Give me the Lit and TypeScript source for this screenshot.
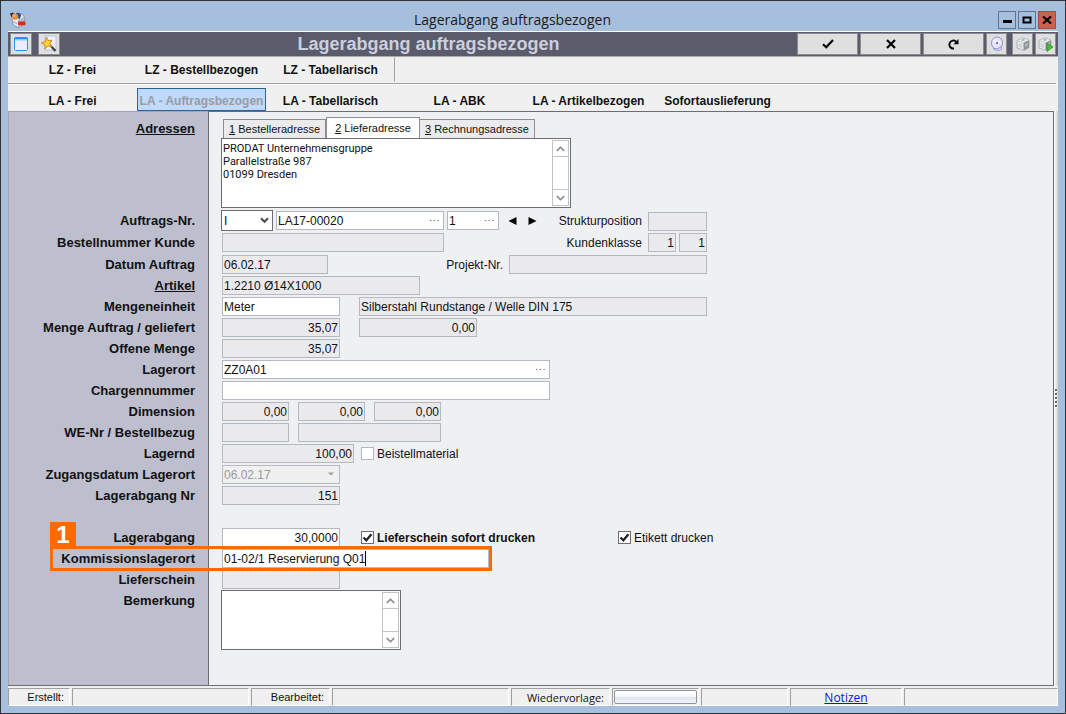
import { LitElement, html, css, svg, nothing, TemplateResult } from "lit";
import { customElement, property } from "lit/decorators.js";
import { classMap } from "lit/directives/class-map.js";

const chevron = (up: boolean) => html`<svg width="9" height="6" viewBox="0 0 9 6" aria-hidden="true">
  <path d=${up ? "M0.8 5 L4.5 1.3 L8.2 5" : "M0.8 1 L4.5 4.7 L8.2 1"} fill="none" stroke="#858585" stroke-width="1.6" />
</svg>`;

const printer = svg`
  <path d="M2 4.500 L8 2 L14 4 L14 11.500 L8.500 14.500 L2 12 Z" fill="#e6e8e9" stroke="#a3a7aa" stroke-width=".8"/>
  <path d="M8.500 6.500 L14 4 L14 11.500 L8.500 14.500 Z" fill="#8d9295"/>
  <path d="M10 8 L12.800 6.700 V9.500 L10 11 Z" fill="#b5babd"/>
  <path d="M2 4.500 L8.500 6.500 L14 4 L8 2 Z" fill="#f8f9f9" stroke="#b5b8ba" stroke-width=".6"/>
  <path d="M6 3.500 L9.500 2.500 L10 4.500 L7 5 Z" fill="#8fc4cf"/>
  <path d="M3.500 8 L7 9.200 M3.500 10 L7 11.200" stroke="#c0c4c6" stroke-width="1"/>`;

@customElement("memo-box")
class MemoBox extends LitElement {
  static styles = css`
    :host { display: flex; box-sizing: border-box; border: 1px solid #6b6d72; background: #fff; padding: 1px; }
    textarea {
      flex: 1; min-width: 0; box-sizing: border-box; border: 0; outline: 0; resize: none; overflow: hidden;
      margin: 0; padding: 2px 0 0; background: #fff; color: #111; font: 11px/13px Roboto, "Noto Sans", sans-serif;
    }
    .bar { display: flex; flex-direction: column; justify-content: space-between; width: 17px; box-sizing: border-box; border: 1px solid #c2c2c2; }
    button { display: grid; place-items: center; height: 16px; padding: 0; border: 0; background: #fff; }
    .up { border-bottom: 1px solid #c2c2c2; }
    .down { border-top: 1px solid #c2c2c2; }
  `;
  @property() text = "";
  @property() name = "";
  render() {
    return html`<textarea aria-label=${this.name} .value=${this.text}></textarea>
      <div class="bar">
        <button class="up" aria-label="Nach oben">${chevron(true)}</button>
        <button class="down" aria-label="Nach unten">${chevron(false)}</button>
      </div>`;
  }
}

interface BoxOptions {
  edit?: boolean;
  right?: boolean;
  more?: boolean;
  label?: string;
}

@customElement("app-root")
class AppRoot extends LitElement {
  static styles = css`
    :host { display: block; font: 12px/16px "Liberation Sans", Arial, sans-serif; color: #111; }
    * { box-sizing: border-box; }
    button { font: inherit; color: inherit; padding: 0; margin: 0; }
    a { color: inherit; }
    svg { display: block; }

    .window { display: flex; flex-direction: column; min-height: 100vh; background: #a6bfdc; border: 1px solid #333; padding: 0 7px 7px; }
    .titlebar { display: grid; grid-template-columns: auto 1fr auto; align-items: center; height: 30px; padding: 7px 2px 0 1px; text-align: center; }
    .titlebar h1 { margin: 0; font: 14px/18px "Open Sans", "Noto Sans", sans-serif; color: #1a1a1a; }
    .controls { display: flex; justify-content: flex-end; gap: 2px; }
    .controls button { display: grid; place-items: center; width: 18px; height: 18px; border: 1px solid #5d7497; background: #a6bfdc; }
    .controls .close { background: #cd6150; border-color: #a94a3d; }

    .client { flex: 1; display: flex; flex-direction: column; background: #f0f0f0; border-top: 1px solid #fff; }
    .toolbar { display: grid; grid-template-columns: auto 1fr auto; align-items: center; height: 25px; padding: 0 2px; background: #5a5c6b; border-bottom: 1px solid #a8a8ae; text-align: center; }
    .toolbar h2 { margin: 0; font: bold 18px/22px "Liberation Sans", Arial, sans-serif; color: #cdcfde; }
    .tools { display: flex; gap: 2px; }
    .tools.left { gap: 6px; }
    .tools button { display: grid; place-items: center; width: 22px; height: 22px; background: #dfdfdf; border: 1px solid #8c8c8c; }
    .tools.right button { width: 21px; }
    .tools.right .wide { width: 61px; }
    .tools .apart { margin-left: 3px; }

    .tabs { display: grid; grid-template-columns: repeat(6, 129px); align-items: end; font-weight: bold; }
    .tabs.first { margin-right: 2px; border-bottom: 1px solid #a0a0a0; height: 27px; align-items: stretch; }
    .tabs.second { border-top: 1px solid #fff; height: 27px; }
    .tabs button { height: 23px; border: 1px solid transparent; background: none; white-space: nowrap; font-weight: bold; padding-top: 3px; }
    .tabs .active { background: #bfd9ff; border-color: #2f6496; color: #9a9ca2; }
    .tabs.first button { height: 25px; padding-top: 0; }
    .tabs .edge { border-right: 1px solid #a0a0a0; }

    .main { flex: 1; display: flex; }
    .form { flex: 1; display: flex; flex-direction: column; border-right: 1px solid #6b6d72; border-bottom: 1px solid #6b6d72; background: #eff0f2; }
    .splitter { display: grid; place-items: center; width: 4px; background: linear-gradient(90deg, #fff, #d0d0d0); }
    .row { position: relative; display: flex; min-height: 21px; }
    .row.tall { min-height: 22px; }
    .row.address { min-height: 99px; }
    .row.address .caption, .row.address .fields { border-top: 1px solid #6b6d72; }
    .row.address .caption { border-top-color: #a5a6b2; padding-top: 8px; }
    .row.fill { flex: 1; }
    .caption { flex: none; width: 200px; padding: 2px 13px 0 0; background: #bdbfcf; border-left: 1px solid #a5a6b2; text-align: right; font: bold 13px/17px "Liberation Sans", Arial, sans-serif; white-space: nowrap; }
    .fields { flex: 1; display: flex; align-items: flex-start; border-left: 1px solid #6b6d72; padding: 1px 0 0 13px; white-space: nowrap; }
    .row.memo .fields, .row.address .fields { padding-top: 0; padding-left: 12px; }
    .line { flex: 0 1 485px; display: flex; }
    .side { margin-left: auto; display: flex; align-items: center; }
    .side label { padding-right: 6px; }
    .side.gap-s label { padding-right: 3px; }
    .gap-s { gap: 3px; }
    .gap-m { gap: 9px; }
    .gap-l { gap: 19px; }
    .gap-c { gap: 7px; }
    .gap-xl { gap: 21px; }

    .box { display: flex; align-items: center; height: 19px; border: 1px solid #b4b8c0; background: #eaeaec; padding: 0 1px; }
    .box.edit { background: #fff; }
    .box input { flex: 1; min-width: 0; width: 100%; height: 17px; padding: 0; border: 0; outline: 0; background: none; font: inherit; color: #111; }
    .box.right input { text-align: right; }
    .box .more { width: 15px; height: 15px; border: 0; background: none; display: grid; place-items: center; }
    .box .typed { flex: none; width: auto; field-sizing: content; }
    .caret { width: 1px; height: 15px; background: #000; }

    .pick { position: relative; height: 19px; }
    .pick select { appearance: none; width: 100%; height: 100%; margin: 0; padding: 0 0 0 1px; border: 1px solid #b4b8c0; border-radius: 0; background: #f0f0f0; font: inherit; color: #9a9a9a; opacity: 1; }
    .pick svg { position: absolute; right: 4px; top: 7px; pointer-events: none; }
    .pick.dark { height: 21px; margin: -1px 0 0 -1px; }
    .pick.dark select { border-color: #6b6d72; background: #fff; color: #111; padding-left: 2px; }
    .pick.light svg { right: 6px; }

    .steps { display: flex; gap: 11px; padding-left: 6px; }
    .steps button { display: grid; place-items: center; width: 9px; height: 19px; border: 0; background: none; }

    .check { display: flex; align-items: center; gap: 3px; height: 19px; }
    .check input { appearance: none; width: 13px; height: 13px; margin: 0; border: 1px solid #b4b8c0; background: #fff; }
    .check input:checked { border-color: #6b6d72; background: #fff url("data:image/svg+xml,%3Csvg xmlns='http://www.w3.org/2000/svg' viewBox='0 0 11 11'%3E%3Cpath d='M1.5 5.5 L4.3 8.3 L9.5 2.2' fill='none' stroke='%23222' stroke-width='2.2'/%3E%3C/svg%3E"); }
    .check.strong { width: 236px; font-weight: bold; }

    .pages { display: flex; align-items: flex-end; height: 26px; padding-left: 2px; font-size: 11px; }
    .pages button { height: 19px; padding: 0 5px; border: 1px solid #8b8d96; border-bottom: 0; background: #ebebed; }
    .pages button + button { border-left: 0; }
    .pages .current { height: 21px; background: #fff; padding: 0 8px; border-left: 1px solid #8b8d96; }
    .stack memo-box.addr { width: 350px; height: 70px; }
    memo-box.note { width: 180px; height: 60px; }

    .mark { position: absolute; left: 42px; top: -2px; width: 442px; height: 25px; border: 3px solid #ff6a00; pointer-events: none; z-index: 1; }
    .badge { position: absolute; left: -3px; bottom: 22px; width: 26px; height: 24px; background: #ff6a00; color: #fff; text-align: center; font: bold 24px/26px "Liberation Sans", Arial, sans-serif; }

    .status { display: flex; gap: 2px; padding-top: 2px; height: 20px; }
    .cell { height: 18px; border: 1px solid #a0a0a0; border-right-color: #fff; border-bottom-color: #fff; line-height: 17px; font-size: 11px; padding-right: 5px; text-align: right; white-space: nowrap; }
    .cell.grow { flex: 1; }
    .cell.ui { font-family: "Open Sans", "Noto Sans", sans-serif; }
    .cell.ui a { color: #0a14e6; }
    .cell.center { text-align: center; padding: 0; font-size: 12px; }
    .cell.hold { padding: 1px; }
    .cell.hold button { display: block; width: 100%; height: 14px; border: 1px solid #8e95a0; border-radius: 2px; background: linear-gradient(#fff, #f4f6f9 50%, #dfe4ec 51%, #f2f5f9); }
  `;

  private box(id: string, value: string, width: number, o: BoxOptions = {}) {
    return html`<div class=${classMap({ box: true, edit: !!o.edit, right: !!o.right })} style="width:${width}px">
      <input id=${id} aria-label=${o.label ?? nothing} .value=${value} ?readonly=${!o.edit} />
      ${o.more
        ? html`<button type="button" class="more" aria-label="Auswählen">
            <svg width="9" height="2" viewBox="0 0 9 2"><path d="M0 .5h1.4M3.7 .5h1.4M7.4 .5h1.4" stroke="#777" stroke-width="1.2" /></svg>
          </button>`
        : nothing}
    </div>`;
  }

  private row(id: string, label: string, content: TemplateResult, gap = "", kind = "") {
    return html`<div class="row ${kind}">
      <label class="caption" for=${id}>${label}</label>
      <div class="fields ${gap}">${content}</div>
    </div>`;
  }

  private tab(label: string, active = false) {
    return html`<button class=${active ? "active" : ""}>${label}</button>`;
  }

  render() {
    const num = { right: true };
    return html`<div class="window">
      <header class="titlebar">
        <svg width="18" height="18" viewBox="0 0 18 18" aria-hidden="true">
          <path d="M3 8 L7 4 L13 3 L15 5 L15.500 13 L9 16.500 L4 14 Z" fill="#e6e8ef" stroke="#7c819b" stroke-width=".8" />
          <path d="M9 9 L15 6 V12 L9 16 Z" fill="#b5b9ca" />
          <path d="M4.500 11 L8 12.500" stroke="#9aa0b8" />
          <path d="M1 2.500 L4 1.500 L6 4 L2.500 6.500 Z" fill="#252c44" />
          <path d="M7 2 Q12 1 12 5 L10.500 8 L8 7 Z" fill="#2a4f96" />
          <circle cx="6" cy="5.600" r="3.200" fill="#ee8b3c" />
          <circle cx="5.400" cy="4.800" r="1.200" fill="#f9b878" />
          <rect x="9" y="10.500" width="7.500" height="3.800" rx="1" fill="#d92b18" />
        </svg>
        <h1>Lagerabgang auftragsbezogen</h1>
        <div class="controls">
          <button aria-label="Minimieren"><svg width="10" height="10" viewBox="0 0 10 10"><path d="M1 6.500h9" stroke="#000" stroke-width="3" /></svg></button>
          <button aria-label="Maximieren"><svg width="10" height="8" viewBox="0 0 10 8"><rect x="1.500" y="1.500" width="7" height="5" fill="none" stroke="#000" stroke-width="2" /></svg></button>
          <button class="close" aria-label="Schließen"><svg width="10" height="8" viewBox="0 0 10 8"><path d="M1 .5 L9 7.500 M9 .5 L1 7.500" stroke="#000" stroke-width="2.200" /></svg></button>
        </div>
      </header>

      <div class="client">
        <div class="toolbar">
          <div class="tools left">
            <button aria-label="Fenster">
              <svg width="16" height="16" viewBox="0 0 16 16"><rect x="1.500" y="1.500" width="13" height="13" rx="1" fill="#ecebff" stroke="#1b97f5" /><path d="M1.500 2.500h13" stroke="#1b97f5" stroke-width="2" /><path d="M2 4h12" stroke="#8fd0ff" /></svg>
            </button>
            <button aria-label="Assistent">
              <svg width="18" height="18" viewBox="0 0 18 18"><rect x="5" y="1" width="11" height="14" fill="#eef3fc" stroke="#a9b9db" stroke-width=".8" /><path d="M9.500 9.500 L15.500 16" stroke="#3c3c46" stroke-width="2.200" /><path d="M6.500 2 L8.300 5.600 L12 5.200 L10 8.500 L12 12 L8 10.800 L5 14 L5 10 L1.500 8 L5.300 6.300 Z" fill="#fbd33c" stroke="#cf7c1a" stroke-width=".9" /></svg>
            </button>
          </div>
          <h2>Lagerabgang auftragsbezogen</h2>
          <div class="tools right">
            <button class="wide" aria-label="Übernehmen"><svg width="12" height="10" viewBox="0 0 12 10"><path d="M1 5.200 L4.300 8.200 L11 1" fill="none" stroke="#000" stroke-width="2.200" /></svg></button>
            <button class="wide" aria-label="Abbrechen"><svg width="10" height="10" viewBox="0 0 10 10"><path d="M1 1 L9 9 M9 1 L1 9" stroke="#000" stroke-width="2.200" /></svg></button>
            <button class="wide" aria-label="Aktualisieren"><svg width="12" height="12" viewBox="0 0 12 12"><path d="M6 10.500 A4 4 0 1 1 8.500 4" fill="none" stroke="#000" stroke-width="1.900" /><path d="M10.500 1 V6.200 H5.500 Z" fill="#000" /></svg></button>
            <button aria-label="Suchen"><svg width="16" height="16" viewBox="0 0 16 16"><ellipse cx="8" cy="7" rx="5.500" ry="6" fill="#e6e6fb" stroke="#8f90cf" /><path d="M4 12.500 Q8 16.500 12.500 13.500 L12 10.500 Q9 13.500 5 12.500 Z" fill="#c9c9ea" stroke="#8f90cf" stroke-width=".7" /><path d="M4 4 L8 7 L11 5" fill="none" stroke="#fff" stroke-width="1.500" /><circle cx="8" cy="7" r="1" fill="#44468c" /></svg></button>
            <button class="apart" aria-label="Drucken"><svg width="16" height="16" viewBox="0 0 16 16">${printer}</svg></button>
            <button aria-label="Drucken starten"><svg width="17" height="17" viewBox="0 0 17 17">${printer}<path d="M10 7.500 L16 11 L10 15.500 Z" fill="#41c32b" stroke="#1f8a1c" stroke-width=".7" /></svg></button>
          </div>
        </div>

        <nav class="tabs first">
          ${this.tab("LZ - Frei")}${this.tab("LZ - Bestellbezogen")}
          <button class="edge">LZ - Tabellarisch</button>
        </nav>
        <nav class="tabs second">
          ${this.tab("LA - Frei")}${this.tab("LA - Auftragsbezogen", true)}${this.tab("LA - Tabellarisch")}
          ${this.tab("LA - ABK")}${this.tab("LA - Artikelbezogen")}${this.tab("Sofortauslieferung")}
        </nav>

        <div class="main">
          <form class="form" @submit=${(e: Event) => e.preventDefault()}>
            <div class="row address">
              <div class="caption"><a href="#adressen">Adressen</a></div>
              <div class="fields">
                <div class="stack">
                  <div class="pages">
                    <button type="button"><u>1</u> Bestelleradresse</button>
                    <button type="button" class="current"><u>2</u> Lieferadresse</button>
                    <button type="button"><u>3</u> Rechnungsadresse</button>
                  </div>
                  <memo-box class="addr" name="Lieferadresse" .text=${"PRODAT Unternehmensgruppe\nParallelstraße 987\n01099 Dresden"}></memo-box>
                </div>
              </div>
            </div>

            ${this.row("auftrag", "Auftrags-Nr.", html`<div class="line gap-s">
              <div class="pick dark" style="width:52px">
                <select id="auftrag"><option>I</option></select>
                <svg width="9" height="7" viewBox="0 0 9 7"><path d="M1 1.200 L4.500 4.800 L8 1.200" fill="none" stroke="#4a4a4a" stroke-width="2" /></svg>
              </div>
              ${this.box("auftragnr", "LA17-00020", 168, { edit: true, more: true, label: "Auftragsnummer" })}
              ${this.box("position", "1", 52, { edit: true, more: true, label: "Position" })}
              <div class="steps">
                <button type="button" aria-label="Zurück"><svg width="9" height="8" viewBox="0 0 9 8"><path d="M8.500 0 V8 L.5 4 Z" fill="#000" /></svg></button>
                <button type="button" aria-label="Weiter"><svg width="9" height="8" viewBox="0 0 9 8"><path d="M.5 0 V8 L8.500 4 Z" fill="#000" /></svg></button>
              </div>
              <div class="side"><label for="struktur">Strukturposition</label>${this.box("struktur", "", 59)}</div>
            </div>`, "", "tall")}
            ${this.row("bestell", "Bestellnummer Kunde", html`<div class="line">
              ${this.box("bestell", "", 222)}
              <div class="side gap-s"><label for="klasse">Kundenklasse</label>${this.box("klasse", "1", 28, num)}${this.box("klasse2", "1", 28, { right: true, label: "Kundenklasse 2" })}</div>
            </div>`, "", "tall")}
            ${this.row("datum", "Datum Auftrag", html`<div class="line">
              ${this.box("datum", "06.02.17", 106)}
              <div class="side"><label for="projekt">Projekt-Nr.</label>${this.box("projekt", "", 198)}</div>
            </div>`)}
            <div class="row">
              <div class="caption"><a href="#artikel">Artikel</a></div>
              <div class="fields">${this.box("artikel", "1.2210 Ø14X1000", 198, { label: "Artikel" })}</div>
            </div>
            ${this.row("einheit", "Mengeneinheit", html`${this.box("einheit", "Meter", 118, { edit: true })}${this.box("bezeichnung", "Silberstahl Rundstange / Welle DIN 175", 348, { label: "Bezeichnung" })}`, "gap-l")}
            ${this.row("menge", "Menge Auftrag / geliefert", html`${this.box("menge", "35,07", 118, num)}${this.box("geliefert", "0,00", 118, { right: true, label: "Geliefert" })}`, "gap-l")}
            ${this.row("offen", "Offene Menge", this.box("offen", "35,07", 118, num))}
            ${this.row("lagerort", "Lagerort", this.box("lagerort", "ZZ0A01", 328, { edit: true, more: true }))}
            ${this.row("charge", "Chargennummer", this.box("charge", "", 328, { edit: true }))}
            ${this.row("dim1", "Dimension", html`${this.box("dim1", "0,00", 67, num)}${this.box("dim2", "0,00", 67, { right: true, label: "Dimension 2" })}${this.box("dim3", "0,00", 67, { right: true, label: "Dimension 3" })}`, "gap-m")}
            ${this.row("wenr", "WE-Nr / Bestellbezug", html`${this.box("wenr", "", 67)}${this.box("bezug", "", 143, { label: "Bestellbezug" })}`, "gap-m")}
            ${this.row("lagernd", "Lagernd", html`${this.box("lagernd", "100,00", 132, num)}<label class="check"><input type="checkbox" />Beistellmaterial</label>`, "gap-c")}
            ${this.row("zugang", "Zugangsdatum Lagerort", html`<div class="pick light" style="width:118px">
              <select id="zugang" disabled><option>06.02.17</option></select>
              <svg width="6" height="4" viewBox="0 0 6 4"><path d="M0 .5 H6 L3 3.500 Z" fill="#9a9a9a" /></svg>
            </div>`)}
            ${this.row("abgangnr", "Lagerabgang Nr", this.box("abgangnr", "151", 118, num))}
            <div class="row"><div class="caption"></div><div class="fields"></div></div>
            ${this.row("abgang", "Lagerabgang", html`${this.box("abgang", "30,0000", 118, { edit: true, right: true })}
              <label class="check strong"><input type="checkbox" checked />Lieferschein sofort drucken</label>
              <label class="check"><input type="checkbox" checked />Etikett drucken</label>`, "gap-xl")}
            <div class="row">
              <label class="caption" for="kommission">Kommissionslagerort</label>
              <div class="fields">
                <div class="box edit" style="width:267px"><input id="kommission" class="typed" .value=${"01-02/1 Reservierung Q01"} /><span class="caret"></span></div>
              </div>
              <div class="mark"><span class="badge">1</span></div>
            </div>
            ${this.row("lieferschein", "Lieferschein", this.box("lieferschein", "", 118))}
            <div class="row memo">
              <div class="caption">Bemerkung</div>
              <div class="fields"><memo-box class="note" name="Bemerkung"></memo-box></div>
            </div>
            <div class="row fill"><div class="caption"></div><div class="fields"></div></div>
          </form>
          <div class="splitter"><svg width="4" height="20" viewBox="0 0 4 20"><path d="M2 1v19" stroke="#fff" stroke-width="2" stroke-dasharray="2 2" /><path d="M2 0v20" stroke="#666" stroke-width="2" stroke-dasharray="2 2" /></svg></div>
        </div>

        <footer class="status">
          <div class="cell" style="width:62px">Erstellt:</div>
          <div class="cell" style="width:177px"></div>
          <div class="cell" style="width:79px">Bearbeitet:</div>
          <div class="cell" style="width:177px"></div>
          <div class="cell ui" style="width:99px">Wiedervorlage:</div>
          <div class="cell hold" style="width:87px"><button aria-label="Wiedervorlage"></button></div>
          <div class="cell" style="width:87px"></div>
          <div class="cell ui center" style="width:112px"><a href="#notizen">Notizen</a></div>
          <div class="cell grow"></div>
        </footer>
      </div>
    </div>`;
  }
}
